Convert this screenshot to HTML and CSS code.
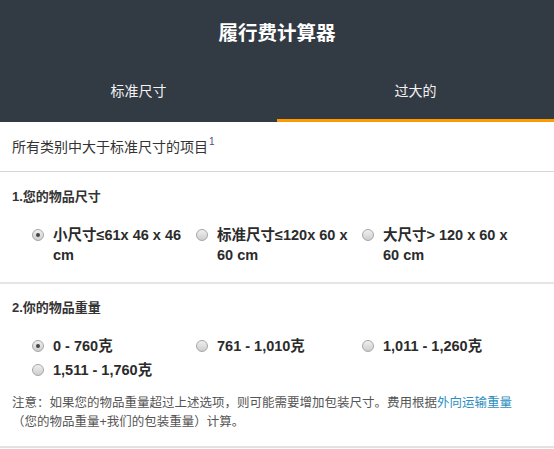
FILE: index.html
```html
<!DOCTYPE html>
<html lang="zh-CN">
<head>
<meta charset="utf-8">
<title>履行费计算器</title>
<link rel="stylesheet" href="styles.css">
</head>
<body>
<div class="calc">
  <header class="head">
    <h1 class="title">履行费计算器</h1>
    <nav class="tabs">
      <div class="tab">标准尺寸</div>
      <div class="tab tab-active">过大的</div>
    </nav>
  </header>
  <div class="intro">所有类别中大于标准尺寸的项目<sup class="sup">1</sup></div>
  <section class="sec sec-first">
    <h2 class="sec-title">1.您的物品尺寸</h2>
    <div class="opts">
      <div class="opt"><span class="radio radio-on"></span><span class="opt-label">小尺寸≤61x 46 x 46 cm</span></div>
      <div class="opt"><span class="radio"></span><span class="opt-label">标准尺寸≤120x 60 x 60 cm</span></div>
      <div class="opt"><span class="radio"></span><span class="opt-label">大尺寸&gt; 120 x 60 x 60 cm</span></div>
    </div>
  </section>
  <section class="sec sec-last">
    <h2 class="sec-title">2.你的物品重量</h2>
    <div class="opts">
      <div class="opt"><span class="radio radio-on"></span><span class="opt-label">0 - 760克</span></div>
      <div class="opt"><span class="radio"></span><span class="opt-label">761 - 1,010克</span></div>
      <div class="opt"><span class="radio"></span><span class="opt-label">1,011 - 1,260克</span></div>
      <div class="opt"><span class="radio"></span><span class="opt-label">1,511 - 1,760克</span></div>
    </div>
    <p class="note">注意：如果您的物品重量超过上述选项，则可能需要增加包装尺寸。费用根据<a class="link" href="#">外向运输重量</a>（您的物品重量+我们的包装重量）计算。</p>
  </section>
</div>
</body>
</html>
```
FILE: styles.css
```css
html, body {
  margin: 0;
  padding: 0;
  background: #ffffff;
}
body {
  font-family: "Liberation Sans", Arial, "Noto Sans CJK SC", sans-serif;
  color: #333333;
}
.calc {
  width: 554px;
}
.head {
  background: #323a44;
  color: #ffffff;
}
.title {
  margin: 0;
  height: 66px;
  line-height: 66px;
  text-align: center;
  font-size: 19.5px;
  font-weight: bold;
}
.tabs {
  display: flex;
}
.tab {
  flex: 1 1 0;
  box-sizing: border-box;
  height: 56px;
  padding-bottom: 6px;
  border-bottom: 3px solid transparent;
  display: flex;
  align-items: center;
  justify-content: center;
  font-size: 14px;
  color: #f2f2f2;
}
.tab-active {
  border-bottom-color: #ff9900;
}
.intro {
  padding: 15px 12px 14px;
  line-height: 20px;
  font-size: 14px;
  color: #333333;
  border-bottom: 1px solid #d6d6d6;
}
.sup {
  font-size: 10px;
  line-height: 0;
  vertical-align: 7px;
  margin-left: 1px;
  color: #5a4a8a;
}
.sec {
  padding: 16px 12px 17px;
}
.sec-first {
  border-bottom: 2px solid #e6e6e6;
}
.sec-last {
  padding-top: 15px;
  padding-bottom: 15px;
  border-bottom: 2px solid #e2e2e2;
}
.sec-title {
  margin: 0 0 19px;
  font-size: 13px;
  line-height: 18px;
  font-weight: bold;
  color: #333333;
}
.opts {
  display: grid;
  grid-template-columns: 164px 166px 1fr;
  row-gap: 4px;
  padding-left: 20px;
}
.opt {
  display: flex;
  align-items: flex-start;
}
.radio {
  flex: 0 0 auto;
  box-sizing: border-box;
  width: 12px;
  height: 12px;
  margin-top: 4px;
  margin-right: 9px;
  border-radius: 50%;
  border: 1px solid #a6a6a6;
  background: linear-gradient(#f0f0f0, #cdcdcd);
  position: relative;
}
.radio-on::after {
  content: "";
  position: absolute;
  left: 3px;
  top: 3px;
  width: 4px;
  height: 4px;
  border-radius: 50%;
  background: #444444;
}
.opt-label {
  max-width: 134px;
  font-size: 14.5px;
  line-height: 20px;
  font-weight: bold;
  color: #2b2b2b;
}
.note {
  max-width: 508px;
  margin: 14px 0 0;
  font-size: 12.5px;
  line-height: 18.5px;
  color: #555555;
}
.link {
  color: #2e8fbf;
  text-decoration: none;
}
```
